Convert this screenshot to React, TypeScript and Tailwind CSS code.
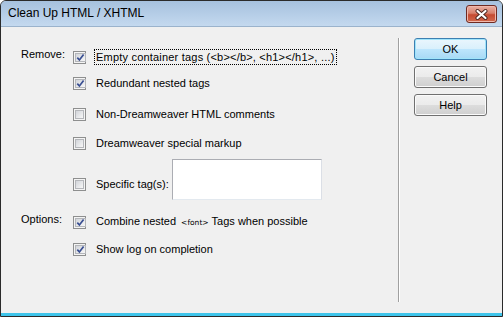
import React from "react";

function Check({ checked }: { checked: boolean }) {
  return (
    <span className="w-[13px] h-[13px] shrink-0 border border-[#8e8f8f] bg-[#f4f4f4] p-[1px] flex">
      <span className="flex-1 border border-[#b4b6ba] bg-gradient-to-br from-[#d2d5da] to-[#f7f7f7] flex items-center justify-center">
        {checked && (
          <svg width="9" height="9" viewBox="0 0 9 9">
            <path d="M1.3 4.6 L3.4 7 L7.6 1.4" fill="none" stroke="#3a4f92" strokeWidth="1.7" />
          </svg>
        )}
      </span>
    </span>
  );
}

function Row({
  label,
  checked,
  children,
  className,
}: {
  label?: string;
  checked: boolean;
  children: React.ReactNode;
  className: string;
}) {
  return (
    <div className={"flex items-center h-[14px] " + className}>
      <span className="w-[52px] shrink-0 -mt-[6px] leading-[14px]">{label ?? ""}</span>
      <Check checked={checked} />
      <span className="ml-[10px] leading-[14px] whitespace-nowrap">{children}</span>
    </div>
  );
}

function Btn({ children, primary }: { children: React.ReactNode; primary?: boolean }) {
  return (
    <div
      className={
        "w-[73px] h-[22px] rounded-[3px] border flex items-center justify-center leading-[14px] " +
        (primary
          ? "border-[#3c7fb1] bg-[linear-gradient(to_bottom,#eaf6fd_0%,#d9f0fc_50%,#bee6fd_50%,#a7d9f5_100%)] shadow-[inset_0_0_0_1px_#9fe4fb]"
          : "border-[#707070] bg-[linear-gradient(to_bottom,#f2f2f2_0%,#ebebeb_50%,#dddddd_50%,#cfcfcf_100%)] shadow-[inset_0_0_0_1px_#fbfbfb]")
      }
    >
      {children}
    </div>
  );
}

export default function App() {
  return (
    <div
      className="w-[503px] h-[317px] flex flex-col border border-[#2a2a2a] rounded-t-[6px] overflow-hidden bg-[#c3d8ee] text-black text-[11px]"
      style={{ fontFamily: '"Liberation Sans", Arial, sans-serif' }}
    >
      <div className="h-[25px] shrink-0 flex items-start justify-between bg-gradient-to-b from-[#a6c1de] to-[#c4d9ef]">
        <span className="pl-[7px] pt-[4px] text-[12px] leading-[16px]">Clean Up HTML / XHTML</span>
        <div className="mt-[4px] mr-[5px] w-[31px] h-[18px] rounded-[3px] border border-[#6f2a22] bg-[linear-gradient(to_bottom,#eab0a4_0%,#d8806c_45%,#c54a31_55%,#d1694e_100%)] shadow-[inset_0_0_0_1px_#f0b8ac] flex items-center justify-center">
          <svg width="13" height="11" viewBox="0 0 13 11">
            <path d="M2.5 2 L10.5 9 M10.5 2 L2.5 9" stroke="#4a2520" strokeWidth="4" strokeLinecap="round" />
            <path d="M2.5 2 L10.5 9 M10.5 2 L2.5 9" stroke="#ffffff" strokeWidth="2.2" strokeLinecap="round" />
          </svg>
        </div>
      </div>
      <div className="flex-1 flex bg-[#f0f0f0] border-t border-[#9bb3cc]">
        <div className="w-[397px] shrink-0 pl-[20px] flex flex-col">
          <Row label="Remove:" checked className="mt-[23px]">
            <span className="border border-dotted border-black px-[1px] py-[1px] -ml-[2px] tracking-[0.2px]">
              Empty container tags (&lt;b&gt;&lt;/b&gt;, &lt;h1&gt;&lt;/h1&gt;, ...)
            </span>
          </Row>
          <Row checked className="mt-[12px]">
            Redundant nested tags
          </Row>
          <Row checked={false} className="mt-[17px]">
            Non-Dreamweaver HTML comments
          </Row>
          <Row checked={false} className="mt-[15px]">
            Dreamweaver special markup
          </Row>
          <div className="mt-[9px] flex items-start h-[41px]">
            <span className="w-[52px] shrink-0" />
            <div className="w-[99px] shrink-0 mt-[18px] flex items-center h-[14px]">
              <Check checked={false} />
              <span className="ml-[10px] leading-[14px] whitespace-nowrap">Specific tag(s):</span>
            </div>
            <div className="w-[150px] h-[41px] bg-white border border-[#abadb3] border-r-[#dbdfe6] border-b-[#e3e9ef]" />
          </div>
          <Row label="Options:" checked className="mt-[15px]">
            Combine nested
            <span className="text-[7.5px] ml-[5px] mr-[3px]" style={{ fontFamily: '"DejaVu Sans", Verdana, sans-serif' }}>
              &lt;font&gt;
            </span>
            Tags when possible
          </Row>
          <Row checked className="mt-[13px]">
            Show log on completion
          </Row>
        </div>
        <div className="w-px bg-[#a0a0a0] my-[11px] shrink-0" />
        <div className="w-px bg-white my-[11px] shrink-0" />
        <div className="pl-[14px] pt-[11px] flex flex-col gap-[6px]">
          <Btn primary>OK</Btn>
          <Btn>Cancel</Btn>
          <Btn>Help</Btn>
        </div>
      </div>
      <div className="h-[3px] shrink-0 bg-[#3ec4ea]" />
    </div>
  );
}
